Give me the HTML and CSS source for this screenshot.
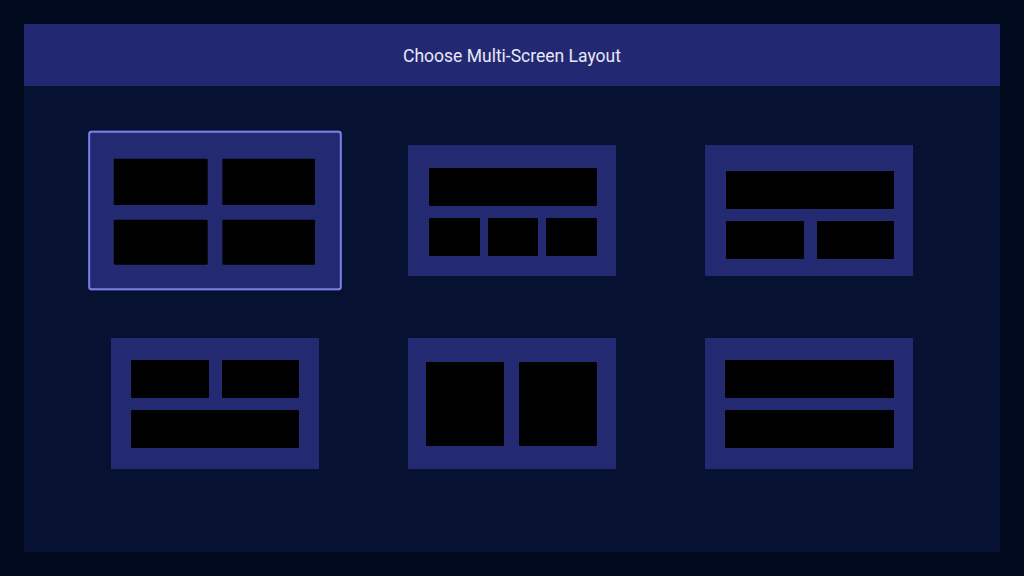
FILE: index.html
```html
<!DOCTYPE html>
<html lang="en">
<head>
<meta charset="utf-8">
<title>Choose Multi-Screen Layout</title>
<link rel="stylesheet" href="styles.css">
</head>
<body>
<div class="panel">
  <header class="header">Choose Multi-Screen Layout</header>
  <main class="grid">
    <div class="card quad selected">
      <div class="pane"></div><div class="pane"></div>
      <div class="pane"></div><div class="pane"></div>
    </div>
    <div class="card top-three">
      <div class="pane wide"></div>
      <div class="pane"></div><div class="pane"></div><div class="pane"></div>
    </div>
    <div class="card top-two">
      <div class="pane wide"></div>
      <div class="pane"></div><div class="pane"></div>
    </div>
    <div class="card two-bottom">
      <div class="pane"></div><div class="pane"></div>
      <div class="pane wide"></div>
    </div>
    <div class="card side">
      <div class="pane"></div><div class="pane"></div>
    </div>
    <div class="card stack">
      <div class="pane"></div><div class="pane"></div>
    </div>
  </main>
</div>
</body>
</html>
```
FILE: styles.css
```css
html, body {
  margin: 0;
  padding: 0;
  background: #020a20;
  width: 1024px;
  height: 576px;
  overflow: hidden;
  font-family: Roboto, "Liberation Sans", sans-serif;
}

.panel {
  margin: 24px;
  width: 976px;
  height: 528px;
  background: #071233;
  display: flex;
  flex-direction: column;
}

.header {
  height: 62px;
  flex: none;
  background: #232873;
  color: #e6e8f5;
  font-size: 17.5px;
  padding-top: 1px;
  box-sizing: border-box;
  display: flex;
  align-items: center;
  justify-content: center;
}

.grid {
  display: grid;
  grid-template-columns: repeat(3, 208px);
  grid-auto-rows: 131px;
  column-gap: 89px;
  row-gap: 62px;
  padding: 59px 0 0 87px;
}

.card {
  background: #242a72;
  box-sizing: border-box;
  display: grid;
  padding: 22px 20px 21px 20px;
  gap: 12px;
  grid-template-rows: 1fr 1fr;
}

.pane {
  background: #000;
  border-radius: 1px;
}

.pane.wide {
  grid-column: 1 / -1;
}

.quad {
  grid-template-columns: 1fr 1fr;
  padding: 23px 22px 21px 21px;
}

.selected {
  transform: scale(1.22);
  border-radius: 3px;
  box-shadow: inset 0 0 0 1.7px #7b80e6;
}

.top-three {
  grid-template-columns: 1fr 1fr 1fr;
  column-gap: 8px;
  padding: 23px 19px 20px 21px;
}

.top-two {
  grid-template-columns: 1fr 1fr;
  column-gap: 13px;
  padding: 26px 19px 17px 21px;
}

.two-bottom {
  grid-template-columns: 1fr 1fr;
  column-gap: 13px;
}

.side {
  grid-template-columns: 1fr 1fr;
  grid-template-rows: 1fr;
  column-gap: 15px;
  padding: 24px 19px 23px 18px;
}

.stack {
  grid-template-columns: 1fr;
  padding: 22px 19px 21px 20px;
}
```
